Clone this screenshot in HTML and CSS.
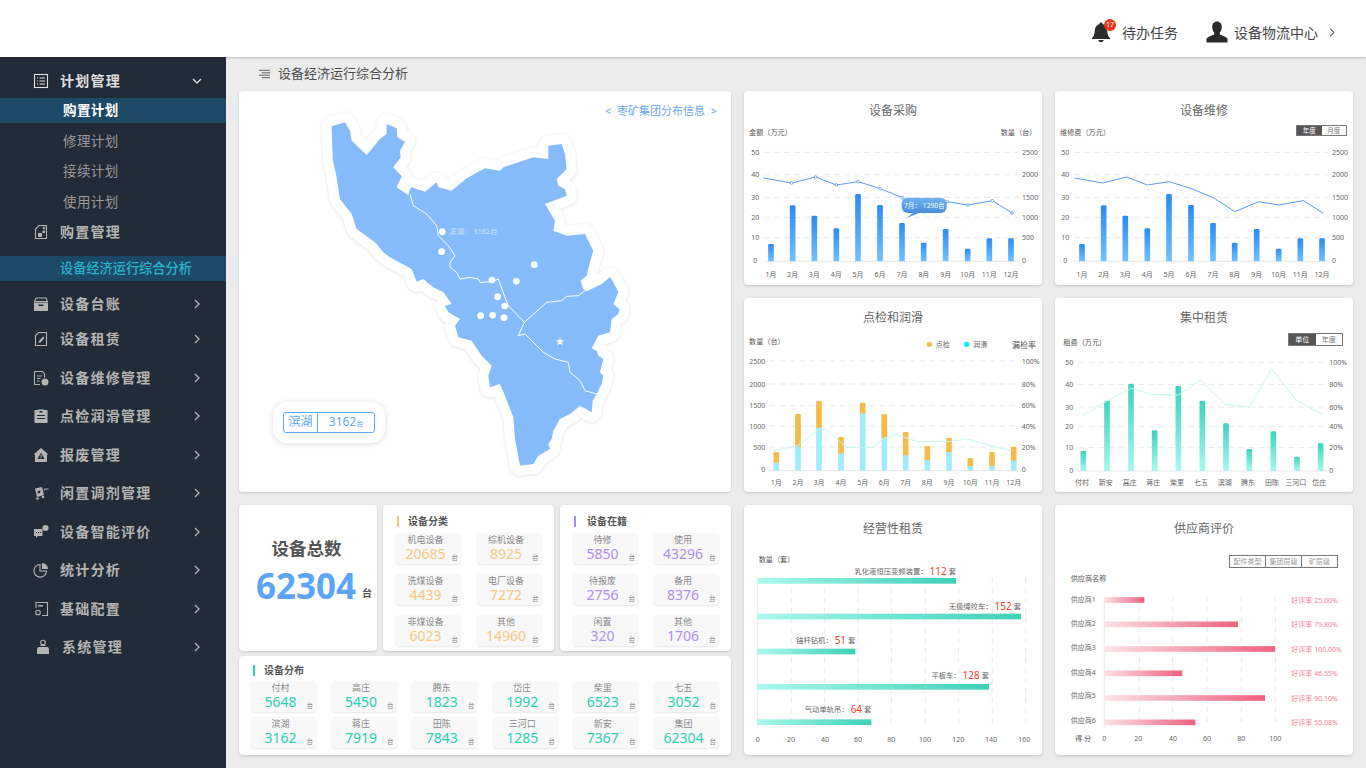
FILE: index.html
```html
<!DOCTYPE html>
<html lang="zh-CN">
<head>
    <meta charset="UTF-8">
    <meta name="viewport" content="width=device-width, initial-scale=1.0">
    <title>设备经济运行综合分析</title>
    <link rel="stylesheet" href="styles.css">
</head>
<body>
    <header class="topbar">
        <div class="top-item">
            <span class="bell">
                <svg class="top-icon" viewBox="0 0 22 22"><path d="M11 1.5c1 0 1.7.7 1.7 1.6 3 .8 4.3 3.400 4.500 6.400.2 3.500 1 6 3.300 8.500H1.500c2.300-2.500 3.100-5 3.300-8.500.2-3 1.500-5.600 4.500-6.400 0-.9.700-1.600 1.700-1.600z"/><path d="M8.300 19h5.400c-.3 1.400-1.300 2.200-2.700 2.200S8.600 20.400 8.300 19z"/></svg>
                <b class="badge">17</b>
            </span>
            <span>待办任务</span>
        </div>
        <div class="top-item top-user">
            <svg class="top-icon" viewBox="0 0 22 22"><path d="M11 .5c3 0 4.800 2.300 4.800 5.400 0 2.200-.8 4.200-2 5.500v2.200c2.500 1.200 6.300 1.900 7.700 4.200v3.700H.5v-3.700c1.400-2.300 5.200-3 7.700-4.200v-2.200c-1.200-1.300-2-3.300-2-5.500C6.200 2.800 8 .5 11 .5z"/></svg>
            <span>设备物流中心</span>
            <svg class="top-chevron" viewBox="0 0 8 12"><path d="M1.500 1l5 5-5 5"/></svg>
        </div>
    </header>

    <div class="layout">
        <nav class="sidebar">
            <div class="menu-item menu-open">
                <svg class="menu-icon" viewBox="0 0 16 16"><rect class="ol" x="1.500" y="1.500" width="13" height="13"/><path class="ol" d="M4 5h1M6.500 5H12M4 8h1M6.500 8H12M4 11h1M6.500 11H12"/></svg>
                <span>计划管理</span>
                <svg class="chevron" viewBox="0 0 12 12"><path d="M2 4l4 4 4-4"/></svg>
            </div>
            <ul class="submenu">
                <li class="sub-current">购置计划</li>
                <li>修理计划</li>
                <li>接续计划</li>
                <li>使用计划</li>
            </ul>
            <div class="menu-item menu-plain">
                <svg class="menu-icon" viewBox="0 0 16 16"><path class="ol" d="M6 1.500h7.500v13h-11V5z"/><path class="fl" d="M5 9h4v4H5zM9.500 6.500h2.500v2.500H9.500z"/><path class="ol" d="M11 2.500v3M9.500 4h3"/></svg>
                <span>购置管理</span>
            </div>
            <div class="menu-band">设备经济运行综合分析</div>
            <div class="menu-item menu-short">
                <svg class="menu-icon" viewBox="0 0 16 16"><path class="ol" d="M3 2h10l1.500 3.500h-13z"/><path class="fl" d="M1 6.500h14V15H1zM5.500 8.500v1.500h5V8.500z" fill-rule="evenodd"/></svg>
                <span>设备台账</span>
                <svg class="chevron" viewBox="0 0 12 12"><path d="M4 2l4 4-4 4"/></svg>
            </div>
            <div class="menu-item menu-short">
                <svg class="menu-icon" viewBox="0 0 16 16"><path class="ol" d="M5.500 1.500h8v13h-11V4.500z"/><path class="fl" d="M10 5.500l1.500 1.500-4 4.500-2 .5.500-2z"/></svg>
                <span>设备租赁</span>
                <svg class="chevron" viewBox="0 0 12 12"><path d="M4 2l4 4-4 4"/></svg>
            </div>
            <div class="menu-item menu-gap">
                <svg class="menu-icon" viewBox="0 0 16 16"><path class="ol" d="M1.500 1.500h8l2 2.500v3.500M7 14.500H1.500z"/><path class="ol" d="M1.500 1.500v13M4 6h5M4 8.500h3.500M4 11h2.500"/><circle class="fl" cx="12" cy="12" r="3.500"/></svg>
                <span>设备维修管理</span>
                <svg class="chevron" viewBox="0 0 12 12"><path d="M4 2l4 4-4 4"/></svg>
            </div>
            <div class="menu-item">
                <svg class="menu-icon" viewBox="0 0 16 16"><path class="fl" d="M1.500 2H5v-.5h6V2h3.500v13h-13zM4 7v1h8V7zM4 10v1h8v-1zM6.500 3v1.500h3V3z" fill-rule="evenodd"/></svg>
                <span>点检润滑管理</span>
                <svg class="chevron" viewBox="0 0 12 12"><path d="M4 2l4 4-4 4"/></svg>
            </div>
            <div class="menu-item">
                <svg class="menu-icon" viewBox="0 0 16 16"><path class="fl" d="M8 1l7.500 6.500H14V15H2V7.500H.5zM8 5.500L4.500 12h7zM7.500 7.500h1v2.500h-1zM7.500 10.500h1v1h-1z" fill-rule="evenodd"/></svg>
                <span>报废管理</span>
                <svg class="chevron" viewBox="0 0 12 12"><path d="M4 2l4 4-4 4"/></svg>
            </div>
            <div class="menu-item">
                <svg class="menu-icon" viewBox="0 0 16 16"><path class="fl" d="M2 3.500l7-1.500 2 8-7 2zM5 6l-.5 2.500L7 8l.5-2.500z" fill-rule="evenodd"/><path class="ol" d="M11 5.500l1-1.500h3.500"/><circle class="fl" cx="4.500" cy="13.500" r="1.300"/><circle class="fl" cx="10" cy="12" r="1.300"/></svg>
                <span>闲置调剂管理</span>
                <svg class="chevron" viewBox="0 0 12 12"><path d="M4 2l4 4-4 4"/></svg>
            </div>
            <div class="menu-item">
                <svg class="menu-icon" viewBox="0 0 16 16"><path class="fl" d="M1 5h8.500v7H5l-2 2v-2H1zM3 8v1h1V8zM5 8v1h1V8zM7 8v1h1V8z" fill-rule="evenodd"/><circle class="fl" cx="12.500" cy="4" r="3"/></svg>
                <span>设备智能评价</span>
                <svg class="chevron" viewBox="0 0 12 12"><path d="M4 2l4 4-4 4"/></svg>
            </div>
            <div class="menu-item">
                <svg class="menu-icon" viewBox="0 0 16 16"><path class="ol" d="M7 2.500a6.300 6.300 0 1 0 6.500 6.500H7z"/><path class="fl" d="M9 1a6 6 0 0 1 6 6H9z"/></svg>
                <span>统计分析</span>
                <svg class="chevron" viewBox="0 0 12 12"><path d="M4 2l4 4-4 4"/></svg>
            </div>
            <div class="menu-item">
                <svg class="menu-icon" viewBox="0 0 16 16"><path class="ol" d="M3 7V1.500h11.500v13H9"/><path class="fl" d="M5 4h5v1.500H5z"/><circle class="ol" cx="5" cy="11.500" r="2.300"/></svg>
                <span>基础配置</span>
                <svg class="chevron" viewBox="0 0 12 12"><path d="M4 2l4 4-4 4"/></svg>
            </div>
            <div class="menu-item menu-sys">
                <svg class="menu-icon" viewBox="0 0 16 16"><circle class="ol" cx="8" cy="3.500" r="2.300"/><path class="fl" d="M3 8h10l1 2v5H2v-5z"/><path class="ol" d="M5.500 6.500h5"/></svg>
                <span>系统管理</span>
                <svg class="chevron" viewBox="0 0 12 12"><path d="M4 2l4 4-4 4"/></svg>
            </div>
        </nav>

        <main class="content">
            <div class="crumb">
                <svg class="crumb-icon" viewBox="0 0 12 10"><path d="M0 1h12M3 3.700h9M0 6.300h12M3 9h9"/></svg>
                <span>设备经济运行综合分析</span>
            </div>

            <div class="dash">
                <section class="card map-card">
                    <svg class="map" viewBox="-3 6 1476 1200">
                        <polygon class="region-halo" points="275,112 315,100 330,125 335,155 380,198 420,150 440,135 440,105 470,118 472,145 495,158 480,185 482,205 460,235 485,262 470,295 505,318 510,300 515,295 555,308 590,280 595,295 635,305 680,268 735,238 780,245 790,235 880,205 925,210 925,170 965,165 975,195 980,240 950,270 955,290 975,300 980,320 915,345 945,395 940,425 980,440 1035,435 1060,485 1050,520 1040,560 1022,575 1030,600 1040,607 1085,585 1110,565 1120,580 1135,610 1120,645 1138,660 1135,675 1115,690 1110,730 1075,740 1055,778 1070,785 1075,800 1090,810 1080,850 1090,860 1085,885 1070,915 1058,935 1055,970 1020,950 990,975 960,990 940,1025 935,1050 925,1065 930,1080 895,1100 880,1125 840,1130 825,1050 820,985 795,920 780,885 750,895 745,860 755,830 725,800 695,755 655,745 645,710 660,690 625,670 615,650 635,645 610,610 580,595 550,570 530,578 515,540 450,505 430,490 405,460 350,420 335,375 300,330 288,255 278,210"/>
                        <polygon class="region" points="275,112 315,100 330,125 335,155 380,198 420,150 440,135 440,105 470,118 472,145 495,158 480,185 482,205 460,235 485,262 470,295 505,318 510,300 515,295 555,308 590,280 595,295 635,305 680,268 735,238 780,245 790,235 880,205 925,210 925,170 965,165 975,195 980,240 950,270 955,290 975,300 980,320 915,345 945,395 940,425 980,440 1035,435 1060,485 1050,520 1040,560 1022,575 1030,600 1040,607 1085,585 1110,565 1120,580 1135,610 1120,645 1138,660 1135,675 1115,690 1110,730 1075,740 1055,778 1070,785 1075,800 1090,810 1080,850 1090,860 1085,885 1070,915 1058,935 1055,970 1020,950 990,975 960,990 940,1025 935,1050 925,1065 930,1080 895,1100 880,1125 840,1130 825,1050 820,985 795,920 780,885 750,895 745,860 755,830 725,800 695,755 655,745 645,710 660,690 625,670 615,650 635,645 610,610 580,595 550,570 530,578 515,540 450,505 430,490 405,460 350,420 335,375 300,330 288,255 278,210"/>
                        <polyline class="river" points="510,315 520,350 560,375 590,410 595,440 625,470 645,500 630,520 630,535 650,550 660,570 690,565 715,570 720,580 755,578 775,570 795,625 805,650 853,700 835,740 855,735 890,770 910,790 945,810 985,820 990,850 1020,875 1035,905 1070,915"/>
                        <polyline class="river" points="853,700 920,640 965,635 980,622 1015,620 1035,605"/>
                        <g class="map-dots">
                            <circle cx="607" cy="428" r="10"/><circle cx="605" cy="488" r="10"/><circle cx="883" cy="527" r="10"/>
                            <circle cx="756" cy="573" r="10"/><circle cx="829" cy="577" r="10"/><circle cx="773" cy="623" r="10"/>
                            <circle cx="794" cy="651" r="10"/><circle cx="722" cy="680" r="10"/><circle cx="758" cy="679" r="10"/>
                            <circle cx="792" cy="686" r="10"/>
                            <polygon points="960,746 963,754 972,754 965,760 968,769 960,764 952,769 955,760 948,754 957,754"/>
                        </g>
                        <text class="map-label" x="628" y="436">滨湖： 3162台</text>
                    </svg>
                    <a class="map-link">&lt; &nbsp;枣矿集团分布信息&nbsp; &gt;</a>
                    <div class="map-legend">
                        <div class="legend-box">
                            <span class="legend-name">滨湖</span>
                            <span class="legend-value">3162<small>台</small></span>
                        </div>
                    </div>
                </section>

                <section class="card chart-card">
                    <h3 class="chart-title">设备采购</h3>
                    <svg class="chart" id="chart-buy" viewBox="12 99 894 492"></svg>
                </section>
                <section class="card chart-card">
                    <h3 class="chart-title">设备维修</h3>
                    <div class="toggle toggle-repair"><span class="on">年度</span><span>月度</span></div>
                    <svg class="chart" id="chart-repair" viewBox="15 99 894 492"></svg>
                </section>
                <section class="card chart-card">
                    <h3 class="chart-title">点检和润滑</h3>
                    <svg class="chart" id="chart-check" viewBox="12 99 894 492"></svg>
                </section>
                <section class="card chart-card">
                    <h3 class="chart-title">集中租赁</h3>
                    <div class="toggle toggle-rent"><span class="on">单位</span><span>年度</span></div>
                    <svg class="chart" id="chart-rent" viewBox="15 99 894 492"></svg>
                </section>

                <div class="stats">
                    <section class="card total-card">
                        <h2>设备总数</h2>
                        <p class="total-num"><strong>62304</strong><small>台</small></p>
                    </section>

                    <section class="card stat-card">
                        <h4 class="stat-title stat-orange">设备分类</h4>
                        <div class="tile-grid orange">
                            <div class="tile"><span>机电设备</span><b>20685</b><i>台</i></div>
                            <div class="tile"><span>综机设备</span><b>8925</b><i>台</i></div>
                            <div class="tile"><span>洗煤设备</span><b>4439</b><i>台</i></div>
                            <div class="tile"><span>电厂设备</span><b>7272</b><i>台</i></div>
                            <div class="tile"><span>非煤设备</span><b>6023</b><i>台</i></div>
                            <div class="tile"><span>其他</span><b>14960</b><i>台</i></div>
                        </div>
                    </section>

                    <section class="card stat-card">
                        <h4 class="stat-title stat-purple">设备在籍</h4>
                        <div class="tile-grid purple">
                            <div class="tile"><span>待修</span><b>5850</b><i>台</i></div>
                            <div class="tile"><span>使用</span><b>43296</b><i>台</i></div>
                            <div class="tile"><span>待报废</span><b>2756</b><i>台</i></div>
                            <div class="tile"><span>备用</span><b>8376</b><i>台</i></div>
                            <div class="tile"><span>闲置</span><b>320</b><i>台</i></div>
                            <div class="tile"><span>其他</span><b>1706</b><i>台</i></div>
                        </div>
                    </section>

                    <section class="card dist-card">
                        <h4 class="stat-title stat-teal">设备分布</h4>
                        <div class="dist-grid teal">
                            <div class="tile"><span>付村</span><b>5648</b><i>台</i></div>
                            <div class="tile"><span>高庄</span><b>5450</b><i>台</i></div>
                            <div class="tile"><span>腾东</span><b>1823</b><i>台</i></div>
                            <div class="tile"><span>岱庄</span><b>1992</b><i>台</i></div>
                            <div class="tile"><span>柴里</span><b>6523</b><i>台</i></div>
                            <div class="tile"><span>七五</span><b>3052</b><i>台</i></div>
                            <div class="tile"><span>滨湖</span><b>3162</b><i>台</i></div>
                            <div class="tile"><span>蒋庄</span><b>7919</b><i>台</i></div>
                            <div class="tile"><span>田陈</span><b>7843</b><i>台</i></div>
                            <div class="tile"><span>三河口</span><b>1285</b><i>台</i></div>
                            <div class="tile"><span>新安</span><b>7367</b><i>台</i></div>
                            <div class="tile"><span>集团</span><b>62304</b><i>台</i></div>
                        </div>
                    </section>
                </div>

                <section class="card chart-card">
                    <h3 class="chart-title chart-title-tall">经营性租赁</h3>
                    <svg class="chart chart-tall" id="chart-lease" viewBox="12 153 894 612"></svg>
                </section>
                <section class="card chart-card">
                    <h3 class="chart-title chart-title-tall">供应商评价</h3>
                    <div class="toggle toggle-supplier"><span>配件类型</span><span>集团层级</span><span>矿层级</span></div>
                    <svg class="chart chart-tall" id="chart-supplier" viewBox="15 153 894 612"></svg>
                </section>
            </div>
        </main>
    </div>

    <script src="charts.js"></script>
</body>
</html>
```

FILE: styles.css
```css
* { box-sizing: border-box; }
body { margin: 0; height: 768px; overflow: hidden; background: #ececec; color: #555; font-family: "Noto Sans", "Noto Sans CJK SC", sans-serif; }

/* top bar */
.topbar { height: 57px; background: #fff; box-shadow: 0 1px 2px rgba(0,0,0,.2); display: flex; justify-content: flex-end; align-items: center; padding: 7px 31px 0 0; position: relative; z-index: 2; font-size: 14px; color: #444; }
.top-item { display: flex; align-items: center; gap: 10px; }
.top-user { margin-left: 28px; gap: 6px; }
.top-icon { width: 22px; height: 22px; fill: #2b2b2b; display: block; }
.bell { position: relative; display: block; }
.badge { position: absolute; top: -2px; right: -4px; width: 12px; height: 12px; line-height: 12px; border-radius: 50%; background: #e8361e; color: #fff; font-size: 7px; font-weight: 400; text-align: center; }
.top-chevron { width: 6px; height: 9px; margin-left: 5px; fill: none; stroke: #444; stroke-width: 1.4; }

.layout { display: flex; height: 711px; }

/* sidebar */
.sidebar { width: 226px; flex: none; background: #222b38; padding-top: 7px; color: #b4b4b4; font-size: 14px; font-weight: 700; letter-spacing: 1.25px; }
.menu-item { height: 38.5px; display: flex; align-items: center; padding: 0 23px 0 33px; gap: 11px; }
.menu-item span { margin-top: -2px; }
.menu-open { height: 34px; color: #dedede; }
.menu-plain { height: 34px; }
.menu-short { height: 35px; }
.menu-gap { margin-top: 2px; }
.menu-sys { padding-left: 35px; }
.menu-icon { width: 16px; height: 16px; flex: none; }
.menu-icon .ol { fill: none; stroke: currentColor; stroke-width: 1.1; }
.menu-icon .fl { fill: currentColor; }
.chevron { width: 12px; height: 12px; margin-left: auto; fill: none; stroke: currentColor; stroke-width: 1.3; }
.submenu { list-style: none; margin: 0; padding: 0; font-size: 13.5px; font-weight: 400; letter-spacing: .4px; color: #999; }
.submenu li { height: 25px; line-height: 25px; margin-bottom: 5.6px; padding-left: 63px; }
.submenu li:last-child { margin-bottom: 0; }
.submenu .sub-current { background: #1c4a66; color: #fff; font-weight: 700; }
.menu-band { height: 25px; line-height: 25px; margin: 7px 0 5.5px; padding-left: 60px; background: #1c4a66; color: #2ab4cb; font-size: 13.2px; font-weight: 500; letter-spacing: 0; }

/* main area */
.content { flex: 1; padding: 0 13px; min-width: 0; }
.crumb { height: 34px; display: flex; align-items: center; gap: 8px; padding-left: 20px; font-size: 13px; color: #4c4c4c; }
.crumb span { margin-top: -4px; }
.crumb-icon { width: 11px; height: 10px; margin-top: -1px; fill: none; stroke: #555; stroke-width: 1; }
.dash { display: grid; grid-template-columns: 492px 298px 298px; grid-template-rows: 194px 194px 250px; gap: 13px; }
.card { background: #fff; border-radius: 4px; box-shadow: 0 1px 3px rgba(0,0,0,.16); position: relative; }

/* map */
.map-card { grid-row: 1 / 3; }
.map { width: 492px; height: 400px; display: block; }
.region-halo { fill: #fff; stroke: #fff; stroke-width: 60; stroke-linejoin: round; filter: drop-shadow(0 2px 5px rgba(0,0,0,.12)); }
.region { fill: #85bbfb; }
.river { fill: none; stroke: #fff; stroke-width: 3; }
.map-dots { fill: #fff; }
.map-label { font-size: 22px; fill: rgba(255,255,255,.6); }
.map-link { position: absolute; top: 11px; right: 14px; font-size: 11px; line-height: 18px; color: #6ba5e6; }
.map-legend { position: absolute; left: 34px; top: 311px; width: 112px; height: 41px; padding: 10px; background: #fff; border-radius: 14px; box-shadow: 0 1px 6px rgba(0,0,0,.14); }
.legend-box { display: flex; height: 21px; border: 1.5px solid #5ea8f5; border-radius: 3px; color: #5ea8f5; font-size: 12px; line-height: 18px; }
.legend-name { width: 34px; text-align: center; border-right: 1.5px solid #5ea8f5; }
.legend-value { flex: 1; text-align: center; }
.legend-value small { font-size: 7px; }

/* stat cards */
.stats { display: grid; grid-template-columns: 138px 171px 171px; grid-template-rows: 146px 99px; gap: 5px 6px; }
.total-card { display: flex; flex-direction: column; align-items: center; justify-content: center; padding: 0 3px 12px 0; }
.total-card h2 { margin: 0 0 4px; font-size: 17.500px; line-height: 24px; font-weight: 700; color: #555; }
.total-num { margin: 0; display: flex; align-items: flex-end; gap: 6px; padding-left: 15px; line-height: 44px; color: #5ca4f5; }
.total-num strong { font-size: 35px; font-weight: 700; }
.total-num small { font-size: 10px; font-weight: 700; line-height: 30px; color: #555; }
.stat-card { padding: 0 13px; }
.dist-card { grid-column: 1 / 4; padding: 0 11px 0 12px; }
.stat-title { margin: 0; height: 28px; display: flex; align-items: center; gap: 9px; padding: 2px 0 0 1px; font-size: 10px; font-weight: 700; color: #555; }
.stat-title::before { content: ""; width: 2px; height: 11px; margin-top: 2px; }
.stat-orange::before { background: #f5c56e; }
.stat-purple { gap: 11px; }
.stat-purple::before { background: #a98be8; }
.stat-teal::before { background: #23cfae; }
.dist-card .stat-title { height: 25px; padding-left: 2px; }
.tile-grid { display: grid; grid-template-columns: 65px 65px; grid-auto-rows: 31px; gap: 10px 15.5px; }
.dist-grid { display: grid; grid-template-columns: repeat(6, 65px); grid-auto-rows: 31px; gap: 5px 15.6px; }
.tile { position: relative; padding: 0 6px 0 0; background: #f8f8f8; border-radius: 4px; box-shadow: 0 1px 2px rgba(0,0,0,.1); text-align: center; }
.tile span { display: block; height: 13px; font-size: 9px; line-height: 13px; color: #888; }
.tile b { display: block; font-size: 14px; line-height: 16px; font-weight: 400; }
.tile i { position: absolute; right: 3px; bottom: 2px; font-size: 6.500px; line-height: 9px; font-style: normal; color: #888; }
.orange b { color: #f5c97f; }
.purple b { color: #ae8eee; }
.teal b { color: #2bd0b0; }

/* charts */
.chart-title { margin: 0; height: 30px; line-height: 40px; text-align: center; font-size: 12px; font-weight: 400; color: #666; }
.chart-title-tall { height: 46px; line-height: 47px; }
.chart { width: 298px; height: 164px; display: block; }
.chart-tall { height: 204px; }
.chart text { font-size: 21px; fill: #666; }
.chart .axis-name { font-size: 21.500px; fill: #555; }
.chart .lease-label { font-size: 22px; }
.chart .grid { stroke: #e4e4e4; stroke-width: 2.500; stroke-dasharray: 18 12; fill: none; }
.chart .base { stroke: #e4e4e4; stroke-width: 2.500; fill: none; }
.chart .tip-text { fill: #fff; font-size: 20px; }
.chart .red { fill: #f5412d; font-size: 30px; }
.chart .pink { fill: #f0829a; }
.chart .rate-head { font-size: 24px; fill: #555; }
.toggle { position: absolute; display: flex; border: 1px solid #777; background: #fff; font-size: 7px; color: #777; }
.toggle span { flex: 1; text-align: center; }
.toggle .on { background: #555; color: #fff; }
.toggle-repair { left: 241px; top: 34px; width: 51px; height: 11px; line-height: 9px; font-size: 6.500px; }
.toggle-rent { left: 233px; top: 35px; width: 55px; height: 13px; line-height: 11px; }
.toggle-supplier { left: 174px; top: 50px; width: 109px; height: 13px; line-height: 11px; color: #999; }
.toggle-supplier span + span { border-left: 1px solid #777; }
```

FILE: charts.js
```js
// chart coordinates are in 3x units, the viewBox of each svg scales them down
const MONTHS = ['1月', '2月', '3月', '4月', '5月', '6月', '7月', '8月', '9月', '10月', '11月', '12月'];

function text(x, y, str, anchor, cls) {
    return `<text x="${x}" y="${y}" text-anchor="${anchor || 'start'}" dominant-baseline="central"${cls ? ` class="${cls}"` : ''}>${str}</text>`;
}

function gradient(id, x2, y2, from, to) {
    return `<linearGradient id="${id}" x1="0" y1="0" x2="${x2}" y2="${y2}"><stop offset="0" stop-color="${from}"/><stop offset="1" stop-color="${to}"/></linearGradient>`;
}

function bar(cx, top, base, fill) {
    return `<path d="M${cx - 8.5} ${base}V${top + 4}q0-4 4-4h9q4 0 4 4V${base}z" fill="${fill}"/>`;
}

function hGrid(ys, x1, x2, leftLabels, rightLabels, leftX, leftAnchor, rightX) {
    let out = '';
    ys.forEach((y, i) => {
        if (i < ys.length - 1) out += `<line class="grid" x1="${x1}" x2="${x2}" y1="${y}" y2="${y}"/>`;
        out += text(leftX, y, leftLabels[i], leftAnchor);
        out += text(rightX, y, rightLabels[i]);
    });
    return out;
}

function line(points, color, width) {
    return `<polyline points="${points.map(p => p.join(',')).join(' ')}" fill="none" stroke="${color}" stroke-width="${width}" stroke-linejoin="round"/>`;
}

function monthBars(opts) {
    const xs = [93, 158, 223, 289, 354, 420, 486, 551, 617, 683, 748, 813];
    const tops = [468, 352, 383, 421, 318, 351, 405, 464, 423, 482, 451, 451];
    const pts = [[70, 270], [155, 285], [227, 267], [289, 291], [355, 281], [421, 302], [487, 329], [552, 371], [622, 341], [684, 351], [757, 338], [816, 375]];
    const ys = [193, 260, 328, 388, 449, 518];
    let out = `<defs>${gradient(opts.id, 0, 1, '#2a8bf2', '#70c2ff')}</defs>`;
    out += hGrid(ys, 72, 838, ['50', '40', '30', '20', '10', '0'], ['2500', '2000', '1500', '1000', '500', '0'], 46, 'middle', 846);
    out += `<line class="base" x1="70" x2="838" y1="520" y2="520"/>`;
    xs.forEach((x, i) => {
        out += bar(x + opts.dx, tops[i], 520, `url(#${opts.id})`);
        out += text(x + opts.dx, 560, MONTHS[i], 'middle');
    });
    out += line(pts.map(p => [p[0] + opts.dx, p[1]]), '#5b9bf5', 3);
    return out;
}

function drawBuy() {
    let out = monthBars({ id: 'buyBar', dx: 0 });
    const pts = [[155, 285], [227, 267], [289, 291], [355, 281], [421, 302], [487, 329], [552, 371], [622, 341], [684, 351], [757, 338], [816, 375]];
    pts.forEach(p => { out += `<circle cx="${p[0]}" cy="${p[1]}" r="4" fill="#fff" stroke="#5b9bf5" stroke-width="2.500"/>`; });
    out += text(27, 133, '金额（万元）', 'start', 'axis-name');
    out += text(782, 133, '数量（台）', 'start', 'axis-name');
    out += `<defs>${gradient('tipFill', 0, 1, '#6fb3f3', '#4b8ed8')}</defs>`;
    out += `<path d="M500 390l22-17h20z" fill="#4b8ed8"/><rect x="485" y="329" width="135" height="46" rx="18" fill="url(#tipFill)"/>`;
    out += text(492, 352, '7月： 1290台', 'start', 'tip-text');
    document.getElementById('chart-buy').innerHTML = out;
}

function drawRepair() {
    let out = monthBars({ id: 'repairBar', dx: 3 });
    out += text(30, 133, '维修费（万元）', 'start', 'axis-name');
    document.getElementById('chart-repair').innerHTML = out;
}

function drawCheck() {
    const xs = [109, 174, 237, 303, 368, 433, 497, 562, 627, 691, 756, 821];
    const orange = [471, 357, 318, 426, 323, 357, 411, 453, 429, 489, 471, 455];
    const cyan = [503, 455, 398, 475, 355, 428, 481, 495, 471, 513, 513, 497];
    const rate = [[100, 468], [174, 452], [237, 402], [260, 405], [320, 458], [395, 458], [433, 430], [468, 418], [497, 428], [535, 440], [627, 440], [680, 432], [756, 453], [815, 467]];
    const ys = [198, 267, 332, 393, 456, 522];
    let out = hGrid(ys, 88, 836, ['2500', '2000', '1500', '1000', '500', '0'], ['100%', '80%', '60%', '40%', '20%', '0'], 76, 'end', 845);
    out += `<line class="base" x1="84" x2="836" y1="527" y2="527"/>`;
    xs.forEach((x, i) => {
        out += bar(x, orange[i], cyan[i] + 4, '#f5bb4a');
        out += `<rect x="${x - 8.5}" y="${cyan[i]}" width="17" height="${527 - cyan[i]}" fill="#a0ecfa"/>`;
        out += text(x, 561, MONTHS[i], 'middle');
    });
    out += line(rate, '#c5f6f6', 3);
    out += text(27, 139, '数量（台）', 'start', 'axis-name');
    out += `<circle cx="568" cy="148" r="8" fill="#f5bb4a"/><circle cx="680" cy="148" r="8" fill="#00f0ff"/>`;
    out += text(587, 148, '点检') + text(700, 148, '润滑');
    out += text(816, 148, '漏检率', 'start', 'rate-head');
    document.getElementById('chart-check').innerHTML = out;
}

function drawRent() {
    const names = ['付村', '新安', '高庄', '蒋庄', '柴里', '七五', '滨湖', '腾东', '田陈', '三河口', '岱庄'];
    const xs = [100, 171, 243, 314, 385, 457, 528, 598, 670, 741, 812];
    const tops = [468, 317, 266, 406, 273, 317, 385, 462, 409, 485, 445];
    const rate = [[97, 362], [171, 318], [243, 280], [305, 298], [385, 300], [452, 255], [525, 328], [598, 337], [665, 222], [738, 315], [815, 357]];
    const ys = [203, 269, 336, 395, 458, 525];
    let out = `<defs>${gradient('rentBar', 0, 1, '#3ed2bd', '#a8f9ee')}</defs>`;
    out += hGrid(ys, 85, 834, ['50', '40', '30', '20', '10', '0'], ['100%', '80%', '60%', '40%', '20%', '0'], 70, 'end', 838);
    out += `<line class="base" x1="82" x2="834" y1="528" y2="528"/>`;
    xs.forEach((x, i) => {
        out += bar(x, tops[i], 528, 'url(#rentBar)');
        out += text(x - 4, 562, names[i], 'middle');
    });
    out += line(rate, '#c8f4ec', 3);
    out += text(40, 141, '租费（万元）', 'start', 'axis-name');
    document.getElementById('chart-rent').innerHTML = out;
}

function drawLease() {
    const rows = [
        { name: '乳化液恒压变频装置：', val: 112, top: 234, right: 648, y: 212 },
        { name: '无极绳绞车：', val: 152, top: 341, right: 843, y: 317 },
        { name: '锚杆钻机：', val: 51, top: 446, right: 346, y: 420 },
        { name: '平板车：', val: 128, top: 552, right: 747, y: 524 },
        { name: '气动单轨吊：', val: 64, top: 658, right: 394, y: 627 }
    ];
    const gx = [154, 254, 354, 454, 556, 656, 757, 857];
    const lx = [53, 153, 255, 354, 454, 555, 655, 753, 853];
    let out = `<defs>${gradient('leaseBar', 1, 0, '#a9f9ee', '#3fd0b8')}</defs>`;
    gx.forEach(x => { out += `<line class="grid" x1="${x}" x2="${x}" y1="232" y2="682"/>`; });
    out += `<line class="base" x1="52" x2="52" y1="232" y2="682"/>`;
    lx.forEach((x, i) => { out += text(x, 718, String(i * 20), 'middle'); });
    rows.forEach(r => {
        out += `<rect x="52" y="${r.top}" width="${r.right - 52}" height="17" fill="url(#leaseBar)"/>`;
        out += `<text class="lease-label" x="${r.right}" y="${r.y}" text-anchor="end" dominant-baseline="central">${r.name} <tspan class="red">${r.val}</tspan> 套</text>`;
    });
    out += text(56, 176, '数量（套）', 'start', 'axis-name');
    document.getElementById('chart-lease').innerHTML = out;
}

function drawSupplier() {
    const rows = [
        { y: 300, right: 283, label: 297, rate: '25.00%' },
        { y: 373, right: 564, label: 369, rate: '79.80%' },
        { y: 447, right: 675, label: 443, rate: '100.00%' },
        { y: 520, right: 397, label: 516, rate: '46.55%' },
        { y: 594, right: 645, label: 587, rate: '90.10%' },
        { y: 667, right: 436, label: 661, rate: '55.08%' }
    ];
    const gx = [268, 368, 471, 574, 676];
    let out = `<defs>${gradient('supplierBar', 1, 0, '#fde2e8', '#f0607f')}</defs>`;
    gx.forEach(x => { out += `<line class="grid" x1="${x}" x2="${x}" y1="290" y2="682"/>`; });
    out += `<line class="base" x1="163" x2="163" y1="290" y2="682"/>`;
    [163, 265, 369, 471, 574, 676].forEach((x, i) => { out += text(x, 716, String(i * 20), 'middle'); });
    rows.forEach((r, i) => {
        out += `<rect x="163" y="${r.y - 8.5}" width="${r.right - 163}" height="17" fill="url(#supplierBar)"/>`;
        out += text(62, r.label, '供应商' + (i + 1));
        out += text(724, r.y, '好评率 ' + r.rate, 'start', 'pink');
    });
    out += text(62, 233, '供应商名称', 'start', 'axis-name');
    out += text(75, 713, '得 分', 'start', 'axis-name');
    document.getElementById('chart-supplier').innerHTML = out;
}

drawBuy();
drawRepair();
drawCheck();
drawRent();
drawLease();
drawSupplier();
```
